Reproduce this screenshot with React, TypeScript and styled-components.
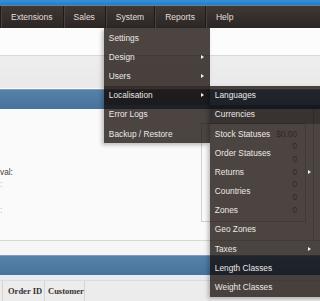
import styled, { createGlobalStyle } from "styled-components";

const GlobalStyle = createGlobalStyle`
  html, body {
    margin: 0;
    padding: 0;
    background: #fafafa;
    overflow: hidden;
  }
  body {
    font-family: "Liberation Sans", Arial, sans-serif;
  }
`;

const Page = styled.div`
  width: 320px;
  height: 301px;
  display: flex;
  flex-direction: column;
  background: #fafafa;
  overflow: hidden;
`;

const TopStrip = styled.div`
  height: 5px;
  background: linear-gradient(#3792dc, #1f7dcc);
  border-bottom: 1px solid #6d7f8c;
`;

const NavBar = styled.ul`
  display: flex;
  height: 22px;
  margin: 0;
  padding: 0;
  list-style: none;
  background: linear-gradient(#3f3835, #2c2624);
  position: relative;
  z-index: 2;
`;

const NavItem = styled.li`
  position: relative;
  display: flex;
  align-items: center;
  padding: 0 10px;
  font-size: 8.5px;
  color: #e2dfdd;
  border-left: 1px solid #1f1a18;
  box-shadow: inset 1px 0 0 #4a4240;
  white-space: nowrap;
`;

const Menu = styled.ul<{ $top: string; $left: string; $width: number }>`
  position: absolute;
  top: ${(p) => p.$top};
  left: ${(p) => p.$left};
  width: ${(p) => p.$width}px;
  margin: 0;
  padding: 0;
  list-style: none;
  background: rgba(14, 4, 0, 0.74);
  box-shadow: -2px 2px 4px rgba(0, 0, 0, 0.25);
`;

const MenuItem = styled.li<{ $tone?: "hover" | "active"; $gap: number }>`
  position: relative;
  display: flex;
  align-items: center;
  justify-content: space-between;
  height: 19.2px;
  padding: 0 ${(p) => p.$gap}px 0 5px;
  font-size: 8.3px;
  color: #ebe8e6;
  background: ${(p) =>
    p.$tone === "hover"
      ? "rgba(0, 0, 0, 0.25)"
      : p.$tone === "active"
      ? "rgba(30, 14, 6, 0.35)"
      : "transparent"};
`;

const Arrow = styled.span`
  width: 0;
  height: 0;
  border-top: 2.5px solid transparent;
  border-bottom: 2.5px solid transparent;
  border-left: 3px solid #f2f2f2;
`;

const TitleBand = styled.div`
  height: 27px;
  background: #fcfcfc;
  border-bottom: 1px solid #d9d9d9;
`;

const Breadcrumb = styled.div`
  height: 32px;
  background: linear-gradient(#eeeeee, #e9e9e9);
  border-bottom: 1px solid #f8f8f8;
`;

const Heading = styled.div`
  height: 19px;
  background: linear-gradient(#5681a8, #47739b);
  border-top: 1px solid #7e9fbd;
`;

const Content = styled.div`
  height: 131px;
  display: flex;
  background: #fafafa;
`;

const Labels = styled.div`
  margin-top: 18.6px;
  display: flex;
  flex-direction: column;
`;

const Line = styled.div<{ $faint?: boolean }>`
  height: 12.7px;
  line-height: 12.7px;
  font-size: 8.3px;
  color: ${(p) => (p.$faint ? "#b8b8b8" : "#3e3e3e")};
  white-space: nowrap;
`;

const Panel = styled.div`
  margin-left: auto;
  margin-right: 6px;
  border-right: 1px solid #d3d3d3;
  display: flex;
  align-items: flex-start;
`;

const StatsBox = styled.div`
  width: 95px;
  margin: 13.6px 7px 0 0;
  padding: 4px 8px 5px 0;
  border: 1px solid #cfcfcf;
  display: flex;
  flex-direction: column;
  align-items: flex-end;
`;

const Value = styled(Line)`
  color: #9a938e;
`;

const Divider = styled.div`
  height: 14px;
  background: #f6f6f6;
  border-top: 1px solid #d6d6d6;
`;

const Gap = styled.div`
  height: 5px;
  background: #e6edf2;
`;

const TableHead = styled.div`
  flex: 1;
  display: flex;
  align-items: stretch;
  background: #ececec;
  border-top: 1px solid #dcdcdc;
`;

const Cell = styled.div<{ $width?: number; $pad: number }>`
  display: flex;
  align-items: center;
  ${(p) => (p.$width ? `width: ${p.$width}px;` : "")}
  padding-left: ${(p) => p.$pad}px;
  border-right: 1px solid #d4d4d4;
  font-family: "Liberation Serif", "Times New Roman", serif;
  font-weight: bold;
  font-size: 8.5px;
  color: #333;
`;

const systemItems = [
  { label: "Settings" },
  { label: "Design", sub: true },
  { label: "Users", sub: true },
  { label: "Localisation", sub: true, open: true },
  { label: "Error Logs" },
  { label: "Backup / Restore" },
];

const localeItems = [
  { label: "Languages" },
  { label: "Currencies", hover: true },
  { label: "Stock Statuses" },
  { label: "Order Statuses" },
  { label: "Returns", sub: true },
  { label: "Countries" },
  { label: "Zones" },
  { label: "Geo Zones" },
  { label: "Taxes", sub: true },
  { label: "Length Classes" },
  { label: "Weight Classes" },
];

const stats = ["$0.00", "0", "0", "0", "0", "0", "0"];

export default function App() {
  return (
    <Page>
      <GlobalStyle />
      <TopStrip />
      <NavBar>
        <NavItem>Extensions</NavItem>
        <NavItem>Sales</NavItem>
        <NavItem>
          System
          <Menu $top="100%" $left="-2px" $width={106}>
            {systemItems.map((item) => (
              <MenuItem key={item.label} $gap={6} $tone={item.open ? "active" : undefined}>
                {item.label}
                {item.sub && <Arrow />}
                {item.open && (
                  <Menu $top="0" $left="100%" $width={120}>
                    {localeItems.map((sub) => (
                      <MenuItem key={sub.label} $gap={19} $tone={sub.hover ? "hover" : undefined}>
                        {sub.label}
                        {sub.sub && <Arrow />}
                      </MenuItem>
                    ))}
                  </Menu>
                )}
              </MenuItem>
            ))}
          </Menu>
        </NavItem>
        <NavItem>Reports</NavItem>
        <NavItem>Help</NavItem>
      </NavBar>
      <TitleBand />
      <Breadcrumb />
      <Heading />
      <Content>
        <Labels>
          <Line />
          <Line />
          <Line />
          <Line>val:</Line>
          <Line $faint>:</Line>
          <Line />
          <Line $faint>:</Line>
        </Labels>
        <Panel>
          <StatsBox>
            {stats.map((v, i) => (
              <Value key={i}>{v}</Value>
            ))}
          </StatsBox>
        </Panel>
      </Content>
      <Divider />
      <Heading />
      <Gap />
      <TableHead>
        <Cell $width={2} $pad={0} />
        <Cell $width={36} $pad={5}>Order ID</Cell>
        <Cell $pad={3}>Customer</Cell>
      </TableHead>
    </Page>
  );
}
